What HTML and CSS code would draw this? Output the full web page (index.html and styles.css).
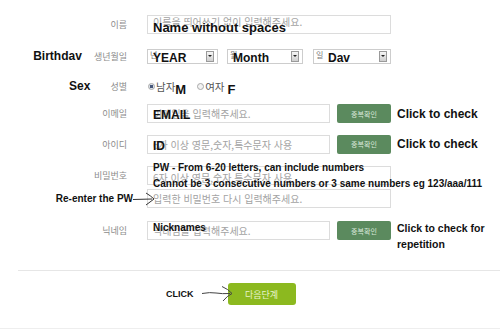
FILE: index.html
```html
<!DOCTYPE html>
<html lang="ko">
<head>
  <meta charset="UTF-8" />
  <title>회원가입</title>
  <link rel="stylesheet" href="styles.css">
</head>
<body>
  <div class="form">
    <div class="row r-name">
      <div class="label">이름</div>
      <div class="fields">
        <div class="box w-full">
          <span class="ph ph-up">이름을 띄어쓰기 없이 입력해주세요.</span>
          <span class="ann ann-name">Name without spaces</span>
        </div>
      </div>
    </div>

    <div class="row r-birth">
      <div class="label"><span class="side side-birth">Birthdav</span>생년월일</div>
      <div class="fields">
        <div class="select s-year"><span class="opt">년</span><span class="ann ann-sel">YEAR</span><span class="drop"></span></div>
        <div class="select s-month"><span class="opt">월</span><span class="ann ann-sel">Month</span><span class="drop"></span></div>
        <div class="select s-day"><span class="opt">일</span><span class="ann ann-sel ann-day">Dav</span><span class="drop"></span></div>
      </div>
    </div>

    <div class="row r-sex">
      <div class="label"><span class="side side-sex">Sex</span>성별</div>
      <div class="fields">
        <span class="radio checked"></span><span class="radio-text">남자</span><span class="mf">M</span>
        <span class="radio radio-2"></span><span class="radio-text">여자</span><span class="mf mf-f">F</span>
      </div>
    </div>

    <div class="row r-email">
      <div class="label">이메일</div>
      <div class="fields">
        <div class="box w-short">
          <span class="ph">이메일을 입력해주세요.</span>
          <span class="ann ann-email">EMAIL</span>
        </div>
        <div class="check-btn">중복확인</div>
        <span class="note">Click to check</span>
      </div>
    </div>

    <div class="row r-id">
      <div class="label">아이디</div>
      <div class="fields">
        <div class="box w-short">
          <span class="ph">6자 이상 영문,숫자,특수문자 사용</span>
          <span class="ann ann-email">ID</span>
        </div>
        <div class="check-btn">중복확인</div>
        <span class="note">Click to check</span>
      </div>
    </div>

    <div class="row r-pw">
      <div class="label">비밀번호</div>
      <div class="fields">
        <div class="box w-full">
          <span class="ph ph-down">6자 이상 영문,숫자,특수문자 사용</span>
          <span class="ann ann-pw">PW - From 6-20 letters, can include numbers<br>Cannot be 3 consecutive numbers or 3 same numbers eg 123/aaa/111</span>
        </div>
      </div>
    </div>

    <div class="row r-re">
      <div class="label">
        <span class="side side-pw">Re-enter the PW</span>
        <svg class="arrow-pw" width="22" height="14" viewBox="0 0 22 14">
          <path d="M0 7.5 L19 7" fill="none" stroke="#333" stroke-width="1"/>
          <path d="M13 1 Q18 4 21 7 Q17 10 13 13" fill="none" stroke="#333" stroke-width="1"/>
        </svg>
      </div>
      <div class="fields">
        <div class="box w-full">
          <span class="ph">입력한 비밀번호 다시 입력해주세요.</span>
        </div>
      </div>
    </div>

    <div class="row r-nick">
      <div class="label">닉네임</div>
      <div class="fields">
        <div class="box w-short">
          <span class="ph">닉네임을 입력해주세요.</span>
          <span class="ann ann-nick">Nicknames</span>
        </div>
        <div class="check-btn">중복확인</div>
        <span class="note note-small">Click to check for<br>repetition</span>
      </div>
    </div>
  </div>

  <div class="separator"></div>

  <div class="next-row">
    <span class="click">CLICK</span>
    <svg class="arrow-next" width="32" height="18" viewBox="0 0 32 18">
      <path d="M0 8.5 Q8 7 14 8 T28 8.5" fill="none" stroke="#444" stroke-width="1"/>
      <path d="M20 1.5 Q26 4 30 8.5 Q25 11 21 16" fill="none" stroke="#444" stroke-width="1"/>
    </svg>
    <div class="next-btn">다음단계</div>
  </div>

  <div class="bottom-line"></div>
</body>
</html>
```

FILE: styles.css
```css
* { margin: 0; padding: 0; box-sizing: border-box; }

body {
  font-family: "Noto Sans CJK KR", "Noto Sans", sans-serif;
  background: #fff;
  width: 500px;
  height: 330px;
  overflow: hidden;
}

.form {
  padding-top: 9px;
}

.row {
  display: flex;
  align-items: center;
}

.r-name { height: 30px; }
.r-birth { height: 34px; }
.r-sex { height: 26px; }
.r-email { height: 29px; }
.r-id { height: 32px; }
.r-pw { height: 30px; }
.r-re { height: 17px; }
.r-nick { height: 47px; }

.label {
  width: 127px;
  flex-shrink: 0;
  display: flex;
  justify-content: flex-end;
  align-items: center;
  font-size: 9px;
  color: #8c8c8c;
  white-space: nowrap;
}

.fields {
  margin-left: 20px;
  display: flex;
  align-items: center;
}

/* annotation text (bold black) */
.side, .ann, .note, .mf, .click {
  font-family: "Liberation Sans", Arial, sans-serif;
  font-weight: bold;
  color: #111;
  white-space: nowrap;
}

.side {
  font-size: 12px;
}

.side-birth { margin-right: 12px; }
.side-sex { margin-right: 20px; }
.side-pw { font-size: 10px; }

.arrow-pw {
  margin-right: -28px;
  position: relative;
  z-index: 2;
}

.box {
  position: relative;
  height: 19px;
  border: 1px solid #dcdcdc;
  background: #fff;
  display: flex;
  align-items: center;
  padding-left: 5px;
  font-size: 10px;
  color: #a3a3a3;
  white-space: nowrap;
}

.w-full { width: 244px; }
.w-short { width: 183px; }

.ph-up { margin-top: -5px; }
.ph-down { margin-top: 4px; }

.ann {
  position: absolute;
  left: 5px;
  font-size: 12px;
  line-height: 1;
  z-index: 1;
}

.ann-name { font-size: 13px; top: 5px; }
.ann-sel { top: 2px; left: 5px; }
.ann-day { left: 14px; }
.ann-email { top: 4px; }
.ann-pw { font-size: 10px; line-height: 16px; top: -7px; }
.ann-nick { font-size: 10px; top: 1px; }

.select {
  position: relative;
  height: 15px;
  border: 1px solid #cdcdcd;
  background: #fff;
  display: flex;
  align-items: flex-start;
  padding-left: 2px;
  font-size: 8px;
  line-height: 9px;
  color: #777;
}

.s-year { width: 71px; }
.s-month { width: 76px; margin-left: 9px; }
.s-day { width: 78px; margin-left: 10px; }

.drop {
  margin-left: auto;
  margin-right: 3px;
  align-self: center;
  width: 8px;
  height: 11px;
  border: 1px solid #9a9a9a;
  background: linear-gradient(#f6f6f6, #cfcfcf);
  display: flex;
  align-items: center;
  justify-content: center;
}

.drop::after {
  content: "";
  border-left: 2px solid transparent;
  border-right: 2px solid transparent;
  border-top: 2px solid #222;
}

.radio {
  width: 7px;
  height: 7px;
  border: 1px solid #a8a8a8;
  border-radius: 50%;
  background: #f2f2f2;
  margin-left: 1px;
}

.radio.checked {
  background: radial-gradient(circle, #46577a 0 1.5px, #dde3ea 2px);
}

.radio-2 { margin-left: 11px; }

.radio-text {
  font-size: 10.5px;
  color: #555;
  margin-left: 1px;
}

.mf {
  font-size: 13px;
  vertical-align: -3px;
  margin-top: 6px;
}

.mf-f { margin-left: 3px; }

.check-btn {
  width: 54px;
  height: 19px;
  margin-left: 7px;
  background: #5b8a5e;
  border-radius: 2px;
  color: #d9e8da;
  font-size: 7px;
  display: flex;
  align-items: center;
  justify-content: center;
}

.note {
  margin-left: 6px;
  font-size: 12px;
}

.note-small {
  font-size: 10.5px;
  line-height: 16px;
  align-self: flex-start;
  margin-top: 13px;
}

.r-nick .fields {
  align-self: stretch;
  align-items: center;
}

.separator {
  margin: 16px 0 0 18px;
  border-top: 1px solid #e6e6e6;
}

.next-row {
  display: flex;
  align-items: center;
  height: 22px;
  margin-top: 12px;
  padding-left: 166px;
}

.click {
  font-size: 9px;
}

.arrow-next {
  margin-left: 8px;
  position: relative;
  z-index: 2;
}

.next-btn {
  width: 68px;
  height: 22px;
  margin-left: -6px;
  background: #8cb91f;
  border-radius: 3px;
  color: #e8f3cc;
  font-size: 9px;
  display: flex;
  align-items: center;
  justify-content: center;
}

.bottom-line {
  margin-top: 23px;
  border-top: 1px solid #eeeeee;
}
```
